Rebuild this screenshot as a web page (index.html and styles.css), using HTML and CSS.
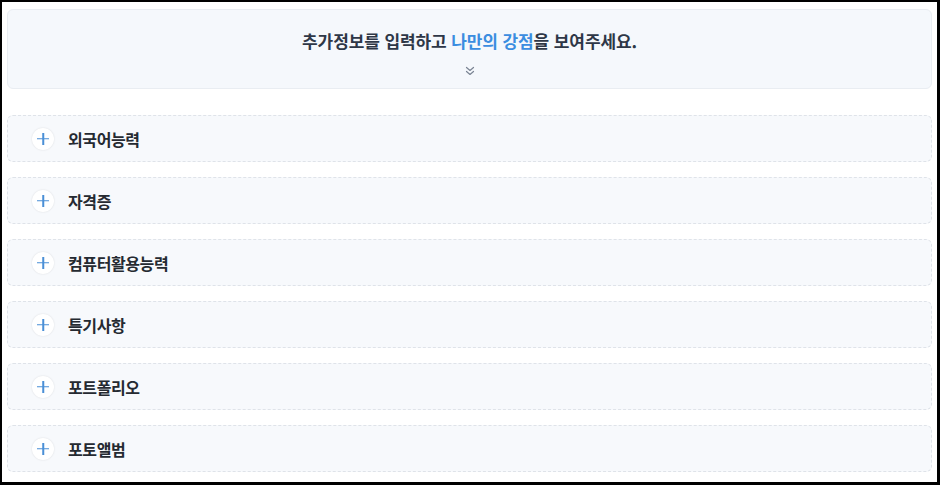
FILE: index.html
```html
<!DOCTYPE html>
<html lang="ko">
<head>
    <meta charset="UTF-8">
    <meta name="viewport" content="width=device-width, initial-scale=1.0">
    <title>추가정보</title>
    <link rel="stylesheet" href="styles.css">
</head>
<body>
    <div class="page">
        <div class="intro">
            <p class="intro-title">추가정보를 입력하고 <span class="accent">나만의 강점</span>을 보여주세요.</p>
            <svg class="chevron" width="10" height="10" viewBox="0 0 10 10">
                <path d="M1.5 1.5 L5 4.5 L8.5 1.5 M1.5 5.5 L5 8.5 L8.5 5.5" fill="none" stroke="#7b8594" stroke-width="1.2" stroke-linecap="round" stroke-linejoin="round"/>
            </svg>
        </div>

        <ul class="sections">
            <li class="section"><span class="plus"></span>외국어능력</li>
            <li class="section"><span class="plus"></span>자격증</li>
            <li class="section"><span class="plus"></span>컴퓨터활용능력</li>
            <li class="section"><span class="plus"></span>특기사항</li>
            <li class="section"><span class="plus"></span>포트폴리오</li>
            <li class="section"><span class="plus"></span>포토앨범</li>
        </ul>
    </div>
</body>
</html>
```

FILE: styles.css
```css
html {
    background-color: #000;
}
body {
    margin: 2px 3px 3px 2px;
    height: 480px;
    background-color: #fff;
    font-family: "Noto Sans CJK KR", "Noto Sans", sans-serif;
    color: #222;
    overflow: hidden;
}
.page {
    padding: 7px 5px 0 5px;
}
.intro {
    height: 78px;
    border: 1px solid #e9edf2;
    border-radius: 6px;
    background-color: #f5f8fc;
    display: flex;
    flex-direction: column;
    align-items: center;
}
.intro-title {
    margin: 18px 0 0;
    font-size: 17px;
    font-weight: 700;
    line-height: 26px;
    color: #2e3747;
    letter-spacing: -0.1px;
}
.accent {
    color: #3b8de0;
}
.chevron {
    margin-top: 12px;
}
.sections {
    list-style: none;
    margin: 26px 0 0;
    padding: 0;
}
.section {
    height: 45px;
    margin-bottom: 15px;
    border: 1px dashed #dfe3e9;
    border-radius: 6px;
    background-color: #f7f9fc;
    display: flex;
    align-items: center;
    padding-left: 24px;
    font-size: 16px;
    font-weight: 700;
    letter-spacing: -0.4px;
    color: #252a31;
}
.plus {
    position: relative;
    width: 22px;
    height: 22px;
    border-radius: 50%;
    background-color: #fff;
    box-shadow: 0 0 2px rgba(0, 0, 0, 0.12);
    margin-right: 14px;
}
.plus::before,
.plus::after {
    content: "";
    position: absolute;
    left: 50%;
    top: 50%;
    background-color: #4a8fd6;
}
.plus::before {
    width: 12px;
    height: 1.5px;
    transform: translate(-50%, -50%);
}
.plus::after {
    width: 1.5px;
    height: 12px;
    transform: translate(-50%, -50%);
}
```
